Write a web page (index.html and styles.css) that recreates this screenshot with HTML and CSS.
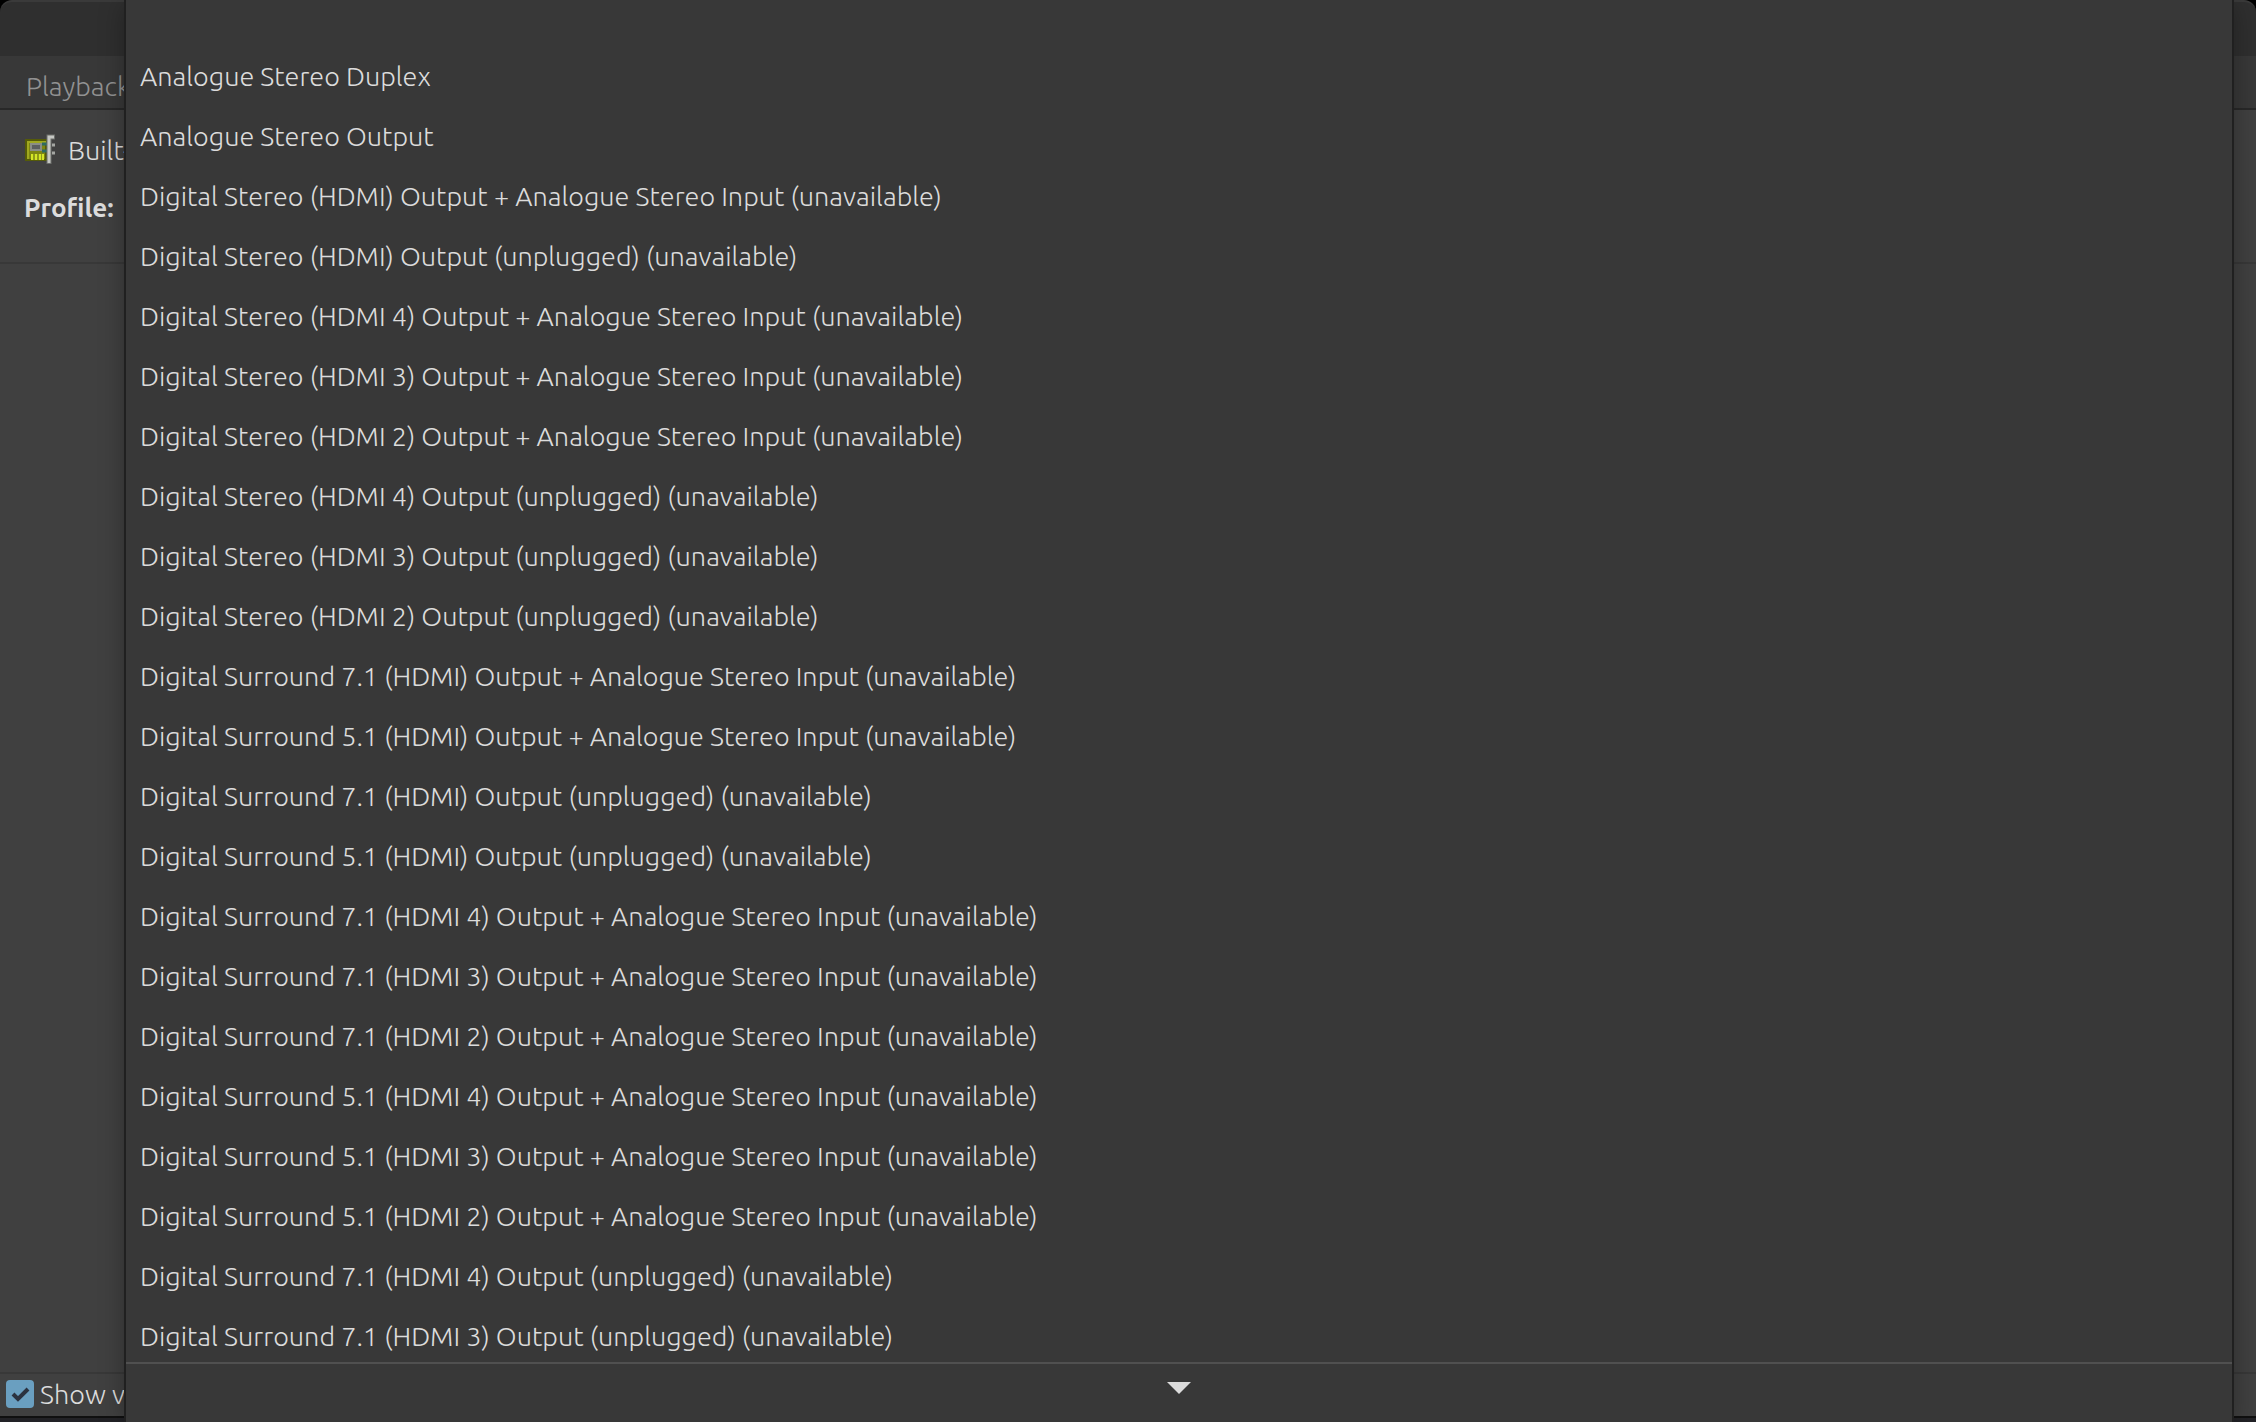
FILE: index.html
```html
<!DOCTYPE html>
<html lang="en-GB">
<head>
  <meta charset="UTF-8">
  <meta name="viewport" content="width=device-width, initial-scale=1.0">
  <title>Volume Control</title>
  <link rel="stylesheet" href="styles.css">
</head>
<body>

<div class="window">
  <header class="titlebar"></header>
  <nav class="tabs">
    <button class="tab">Playback</button>
  </nav>

  <main class="content">
    <section class="card">
      <div class="device">
        <svg class="card-icon" viewBox="0 0 32 32" aria-hidden="true">
          <path d="M2 6h20v20H2z" fill="#7d8512" stroke="#555b08" stroke-width="2"/>
          <path d="M4 25V8h18" fill="none" stroke="#a0a820" stroke-width="2"/>
          <rect x="7" y="10" width="10" height="6" fill="#5c5f60" stroke="#8a8d86" stroke-width="2"/>
          <path d="M18 10h5M18 17h5" stroke="#2d6a62" stroke-width="3"/>
          <path d="M7 23h13" stroke="#8f991a" stroke-width="6"/>
          <path d="M8 20v6M12 20v6M16 20v6M19 20v6" stroke="#d4e626" stroke-width="2"/>
          <path d="M25 30V3h6" fill="none" stroke="#6c6e6b" stroke-width="5"/>
          <path d="M25 29V3h5" fill="none" stroke="#c6c8c4" stroke-width="3"/>
          <path d="M28 11h3M28 19h3" stroke="#a4a6a2" stroke-width="3"/>
        </svg>
        <span>Built-in Audio</span>
      </div>
      <div class="profile">Profile:</div>
    </section>
  </main>

  <footer class="footer">
    <label class="check">
      <input type="checkbox" checked>
      <span class="box">
        <svg viewBox="0 0 28 28" aria-hidden="true"><path d="M7 14l5 5L22 9" fill="none" stroke="#2b3240" stroke-width="4"/></svg>
      </span>
      Show volume meters
    </label>
  </footer>
</div>

<div class="menu">
  <ul class="menu-list">
    <li><button>Analogue Stereo Duplex</button></li>
    <li><button>Analogue Stereo Output</button></li>
    <li><button>Digital Stereo (HDMI) Output + Analogue Stereo Input (unavailable)</button></li>
    <li><button>Digital Stereo (HDMI) Output (unplugged) (unavailable)</button></li>
    <li><button>Digital Stereo (HDMI 4) Output + Analogue Stereo Input (unavailable)</button></li>
    <li><button>Digital Stereo (HDMI 3) Output + Analogue Stereo Input (unavailable)</button></li>
    <li><button>Digital Stereo (HDMI 2) Output + Analogue Stereo Input (unavailable)</button></li>
    <li><button>Digital Stereo (HDMI 4) Output (unplugged) (unavailable)</button></li>
    <li><button>Digital Stereo (HDMI 3) Output (unplugged) (unavailable)</button></li>
    <li><button>Digital Stereo (HDMI 2) Output (unplugged) (unavailable)</button></li>
    <li><button>Digital Surround 7.1 (HDMI) Output + Analogue Stereo Input (unavailable)</button></li>
    <li><button>Digital Surround 5.1 (HDMI) Output + Analogue Stereo Input (unavailable)</button></li>
    <li><button>Digital Surround 7.1 (HDMI) Output (unplugged) (unavailable)</button></li>
    <li><button>Digital Surround 5.1 (HDMI) Output (unplugged) (unavailable)</button></li>
    <li><button>Digital Surround 7.1 (HDMI 4) Output + Analogue Stereo Input (unavailable)</button></li>
    <li><button>Digital Surround 7.1 (HDMI 3) Output + Analogue Stereo Input (unavailable)</button></li>
    <li><button>Digital Surround 7.1 (HDMI 2) Output + Analogue Stereo Input (unavailable)</button></li>
    <li><button>Digital Surround 5.1 (HDMI 4) Output + Analogue Stereo Input (unavailable)</button></li>
    <li><button>Digital Surround 5.1 (HDMI 3) Output + Analogue Stereo Input (unavailable)</button></li>
    <li><button>Digital Surround 5.1 (HDMI 2) Output + Analogue Stereo Input (unavailable)</button></li>
    <li><button>Digital Surround 7.1 (HDMI 4) Output (unplugged) (unavailable)</button></li>
    <li><button>Digital Surround 7.1 (HDMI 3) Output (unplugged) (unavailable)</button></li>
  </ul>
  <button class="scroll-down" aria-label="Scroll down">
    <svg viewBox="0 0 24 12" aria-hidden="true"><path d="M0 0h24L12 12z" fill="#dcdcdc"/></svg>
  </button>
</div>

</body>
</html>
```
FILE: styles.css
```css
* {
  margin: 0;
  padding: 0;
  box-sizing: border-box;
}

body {
  height: 100vh;
  overflow: hidden;
  background-color: #000;
  color: #dcdcdc;
  font-family: Ubuntu, "Open Sans", sans-serif;
  font-size: 27px;
  font-weight: 300;
  line-height: 32px;
}

button {
  border: none;
  background: none;
  color: inherit;
  font: inherit;
  text-align: left;
  white-space: nowrap;
}

.window {
  display: flex;
  flex-direction: column;
  height: 100vh;
  border-bottom: 4px solid #222226;
  white-space: nowrap;
}

.titlebar {
  height: 56px;
  border-top: 2px solid #3a3a3a;
  border-radius: 12px 12px 0 0;
  background-color: #2f2f2f;
}

.tabs {
  height: 54px;
  padding: 14px 26px;
  border-bottom: 2px solid #282828;
  background-color: #383838;
}

.tab {
  color: #929292;
}

.content {
  flex: 1;
  background-color: #404040;
}

.card {
  display: flex;
  flex-direction: column;
  gap: 26px;
  height: 154px;
  padding: 24px;
  border-bottom: 2px solid #383838;
}

.device {
  display: flex;
  align-items: center;
  gap: 12px;
}

.card-icon {
  width: 32px;
  height: 32px;
}

.profile {
  font-size: 26px;
  font-weight: bold;
}

.footer {
  height: 46px;
  border-top: 2px solid #383838;
  border-bottom: 2px solid #101010;
  background-color: #404040;
}

.check {
  display: flex;
  align-items: center;
  gap: 6px;
  height: 40px;
  padding-left: 6px;
}

.check input {
  position: absolute;
  opacity: 0;
}

.box {
  width: 28px;
  height: 28px;
  border-radius: 4px;
  background-color: #6a9fc0;
}

.box svg {
  display: block;
}

/* profile popup, lies over the window */
.menu {
  position: absolute;
  top: 0;
  right: 22px;
  bottom: 0;
  left: 124px;
  display: flex;
  flex-direction: column;
  border: 2px solid #202020;
  border-width: 0 2px;
  background-color: #383838;
  box-shadow: 0 4px 24px rgba(0, 0, 0, 0.3);
}

.menu-list {
  flex: 1;
  min-height: 0;
  overflow: hidden;
  padding-top: 46px;
  list-style: none;
}

.menu-list button {
  display: block;
  width: 100%;
  height: 60px;
  padding: 0 14px;
}

.scroll-down {
  display: flex;
  flex-shrink: 0;
  justify-content: center;
  height: 60px;
  padding-top: 18px;
  border-top: 2px solid #505050;
}

.scroll-down svg {
  width: 24px;
  height: 12px;
}
```
